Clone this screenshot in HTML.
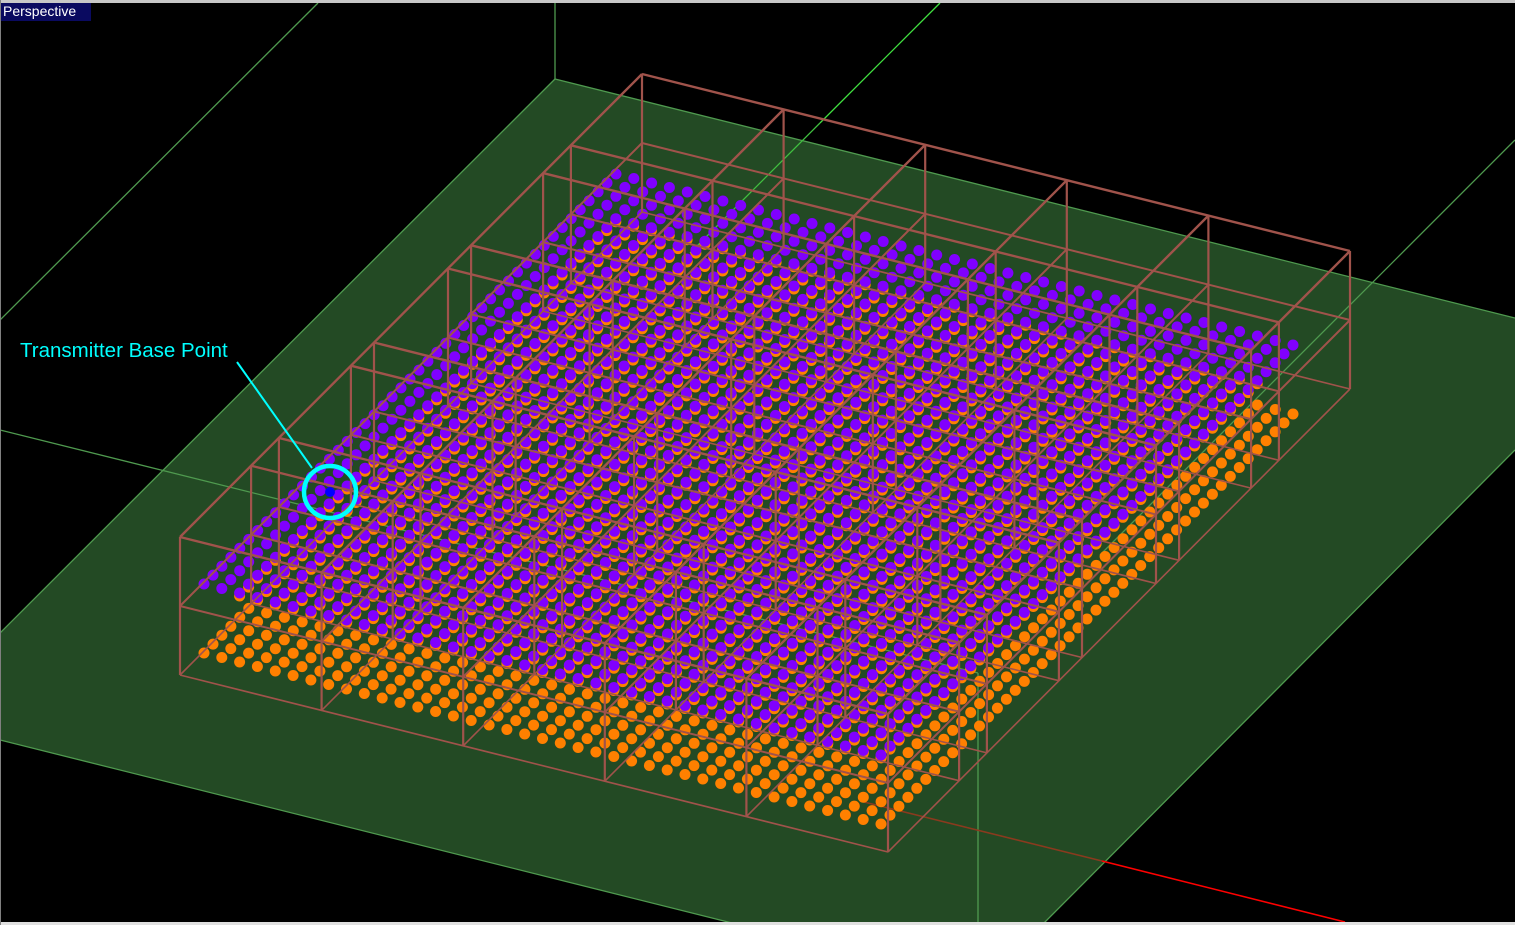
<!DOCTYPE html>
<html><head><meta charset="utf-8"><style>
html,body{margin:0;padding:0;background:#000;overflow:hidden}
#w{position:relative;width:1515px;height:925px;background:#000}
svg{position:absolute;left:0;top:0}
#lbl{position:absolute;left:1px;top:3px;width:90px;height:18px;background:#0a0a60;color:#fff;font:14px "Liberation Sans",sans-serif;line-height:17px;padding-left:2px;box-sizing:border-box}
#tx{position:absolute;left:20px;top:339px;color:#00ffff;font:20.5px "Liberation Sans",sans-serif;white-space:nowrap}
</style></head><body><div id="w">
<svg id="s" width="1515" height="925" xmlns="http://www.w3.org/2000/svg">
<polygon points="555,79 1515,318 1515,450 1042,925 740,925 0,740 0,633" fill="#234a24"/>
<g stroke="#4f9a4f" stroke-width="1.3" fill="none">
<line x1="555" y1="0" x2="555" y2="79"/>
<line x1="555" y1="79" x2="1515" y2="318"/>
<line x1="555" y1="79" x2="0" y2="633"/>
<line x1="0" y1="740" x2="740" y2="925"/>
<line x1="1515" y1="450" x2="1042" y2="925"/>
<line x1="318" y1="3" x2="0" y2="320"/>
<line x1="0" y1="430" x2="978" y2="673"/>
<line x1="978" y1="673" x2="978" y2="925"/>
<line x1="1515" y1="140" x2="1100" y2="555"/>
</g>
<line x1="940" y1="3" x2="820" y2="123" stroke="#40e040" stroke-width="1.3"/>
<line x1="820" y1="123" x2="690" y2="253" stroke="#40c040" stroke-width="1.3"/>
<line x1="860" y1="801" x2="1102" y2="861" stroke="#8a3a1e" stroke-width="1.5"/>
<line x1="1102" y1="861" x2="1345" y2="922" stroke="#ff0000" stroke-width="1.5"/>
<g id="dots"></g>
<g id="box" stroke="#a0534b" stroke-width="2" fill="none"></g>
<line x1="237" y1="362" x2="312" y2="468" stroke="#00ffff" stroke-width="2"/>
<circle cx="330" cy="492" r="26" stroke="#00ffff" stroke-width="4.5" fill="none"/>
<circle cx="330" cy="492" r="5" fill="#0000ff"/>
<rect x="0" y="0" width="1515" height="3" fill="#c8c8c8"/>
<rect x="0" y="922" width="1515" height="3" fill="#e0e0e0"/>
<rect x="0" y="0" width="1" height="925" fill="#808080"/>
</svg>
<div id="lbl">Perspective</div>
<div id="tx">Transmitter Base Point</div>
</div>
<script>
var d=document.getElementById("dots"),b=document.getElementById("box");
var h="";
var O=[616,174],U=[677/38,171/38],V=[-412/46,410/46];
function grid(dy,col,skip){for(var i=0;i<=38;i++)for(var j=0;j<=46;j++){if(skip&&(j<4||i<2))continue;var x=O[0]+i*U[0]+j*V[0],y=O[1]+i*U[1]+j*V[1]+dy;h+='<circle cx="'+x.toFixed(1)+'" cy="'+y.toFixed(1)+'" r="5.5" fill="'+col+'"/>';}}
grid(69,"#ff8000");grid(3,"#ff8000",1);grid(0,"#8000ff");
d.innerHTML=h;
var FL=[180,675],FR=[888,852],BL=[642,212];
function P(s,t,l){return [FL[0]+s*(FR[0]-FL[0])+t*(BL[0]-FL[0]),FL[1]+s*(FR[1]-FL[1])+t*(BL[1]-FL[1])-l*69];}
var S=[0,.2,.4,.6,.8,1],T=[0,.154,.214,.37,.42,.58,.63,.786,.846,1];
var g="";
function L(a,c,w){g+='<line x1="'+a[0].toFixed(1)+'" y1="'+a[1].toFixed(1)+'" x2="'+c[0].toFixed(1)+'" y2="'+c[1].toFixed(1)+'"'+(w?' stroke-width="'+w+'"':'')+'/>';}
for(var l=0;l<3;l++){var w=l==2?2.4:(l==1?2:1.6);S.forEach(function(s){L(P(s,0,l),P(s,1,l),w);});T.forEach(function(t){L(P(0,t,l),P(1,t,l),w);});}
S.forEach(function(s){T.forEach(function(t){L(P(s,t,0),P(s,t,2),2.2);});});
b.innerHTML=g;
</script>
</body></html>
